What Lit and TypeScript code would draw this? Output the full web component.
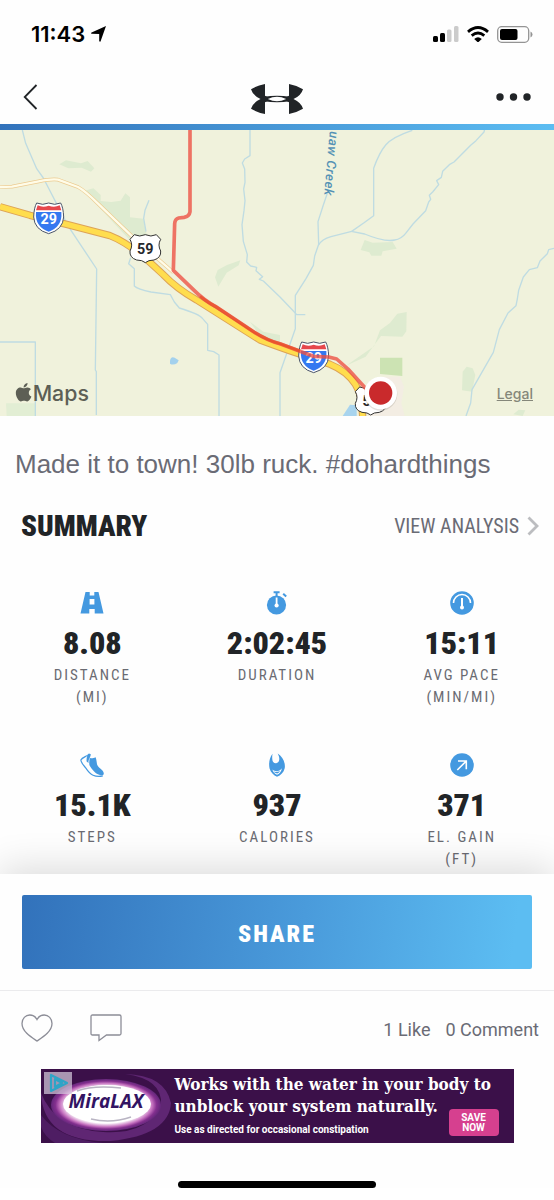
import { LitElement, html, css, svg } from "lit";
import { customElement, property } from "lit/decorators.js";

const icons = {
  road: svg`<path fill="#4499e0" d="M5.5 1h4.2v3.4h4.6V1h4.2L23.5 22.5h-8.8v-4.6H9.3v4.6H.5zM9.6 8v5.6h4.8V8z" fill-rule="evenodd"/>`,
  stopwatch: svg`<circle cx="11.5" cy="14" r="9.6" fill="#4499e0"/><path d="M8.6 1.2h6M11.6 1.2v4M18.2 2.8l3 2.8" stroke="#4499e0" stroke-width="2" fill="none"/><path d="M11.6 6.5v8" stroke="#fff" stroke-width="1.8"/><circle cx="11.6" cy="14.5" r="2.1" fill="#fff"/>`,
  gauge: svg`<circle cx="12" cy="12" r="11.8" fill="#4499e0"/><path d="M3.500 12a8.500 8.500 0 0 1 17 0" fill="none" stroke="#fff" stroke-width="1.600"/><path d="M12 7v9" stroke="#fff" stroke-width="2"/><circle cx="12" cy="16.6" r="2" fill="#fff"/>`,
  shoe: svg`<path fill="#4499e0" d="M9.8 4.8C11.5 5.8 13 5.4 15.6 4.2c1 2.400 1 5 1.500 7.400 1.100 3.900 6.700 5.300 6.700 8.900 0 1-.6 1.600-1.800 1.700-2.700 0-5.800-1.200-7.600-3.400C12 15.800 10.800 14.800 9.600 12.400 8.800 10 9.400 7.200 9.800 4.800z"/><path fill="#4499e0" d="M9 .5l1.800.8c-.3 3.400-2.600 4.700-2.300 8.700L6.600 8.400C6.700 5.600 6.300 3.400 9 .5z"/><path d="M9 1C7 3.500 2.500 4 .8 7c.4 3 2.700 5.200 4.700 7.600 2 3 4.200 6.300 7.500 7.600 3.300 1.400 6.500 1.500 9.800.7" fill="none" stroke="#4499e0" stroke-width="1.200"/>`,
  flame: svg`<path fill="#4499e0" d="M7.500.8C4.600 4.800 3.500 9.500 4.500 15.200c1.200 4.300 4.200 7 7.500 8.600 3.700-1.600 6.700-4.200 7.700-8.600C20.700 9.700 17.500 3.600 12.700.6c1.500 3 2.200 5.600 1 8-1.800 2.600-5.500 2-6.200-1.200-.4-2.200-.4-4.300 0-6.600z"/><path d="M7.300 16.600c1.300 3.400 2.700 4.400 4.700 5.200 2.400-1 4.200-3 4.900-6.600-2.300 3.200-6.300 4-9.600 1.400z" fill="#fff"/><path fill="#4499e0" d="M8.600 18.600c2.200.7 4.500.4 6.300-.7-.7 1.500-1.700 2.200-2.900 2.700-1.400-.5-2.500-1-3.400-2z"/>`,
  gain: svg`<circle cx="12" cy="12" r="11.800" fill="#4499e0"/><path d="M8 8h8.300v8.300M16.300 8L7.300 17" fill="none" stroke="#fff" stroke-width="1.600"/>`,
};

interface Stat {
  icon: keyof typeof icons;
  value: string;
  label: string;
  unit?: string;
}

const stats: Stat[] = [
  { icon: "road", value: "8.08", label: "DISTANCE", unit: "(MI)" },
  { icon: "stopwatch", value: "2:02:45", label: "DURATION" },
  { icon: "gauge", value: "15:11", label: "AVG PACE", unit: "(MIN/MI)" },
  { icon: "shoe", value: "15.1K", label: "STEPS" },
  { icon: "flame", value: "937", label: "CALORIES" },
  { icon: "gain", value: "371", label: "EL. GAIN", unit: "(FT)" },
];

@customElement("stat-tile")
class StatTile extends LitElement {
  @property({ attribute: false }) stat!: Stat;

  static styles = css`
    :host { display: block; text-align: center; }
    .icon { display: block; width: 24px; height: 24px; margin: 0 auto 10px; }
    .value {
      font: 900 32px/36px "Roboto Condensed", Roboto, sans-serif;
      color: #212427;
    }
    .label {
      margin-top: 3px;
      font: 400 15px/22px "Roboto Condensed", "Liberation Sans Narrow", sans-serif;
      letter-spacing: 2px;
      color: #6a6b72;
    }
  `;

  render() {
    const s = this.stat;
    return html`
      <svg class="icon" viewBox="0 0 24 24" aria-hidden="true">${icons[s.icon]}</svg>
      <div class="value">${s.value}</div>
      <div class="label">${s.label}${s.unit ? html`<br />${s.unit}` : ""}</div>
    `;
  }
}

const interstate = (x: number, y: number) => svg`
  <g transform="translate(${x} ${y})">
    <path d="M-36-46q18 8 36 0q18 8 36 0q8 14 9 42q-2 38-45 50q-43-12-45-50q1-28 9-42z" fill="#fff" stroke="#4a5468" stroke-width="3"/>
    <path d="M-38-19h76q4 44-38 59q-42-15-38-59z" fill="#3478f0"/>
    <path d="M-33-39q16 8 33 1q17 7 33-1l5 15h-76z" fill="#e6474c"/>
    <text y="18" class="shield light">29</text>
  </g>`;

const usRoute = (x: number, y: number) => svg`
  <g transform="translate(${x} ${y})">
    <path d="M-33-41q16 8 33 0q17 8 33 0l13 14q-10 17 0 35q2 20-20 27q-17 0-26 8q-9-8-26-8q-22-7-20-27q10-18 0-35z" fill="#fff" stroke="#333" stroke-width="3"/>
    <text y="16" class="shield">59</text>
  </g>`;

@customElement("route-map")
class RouteMap extends LitElement {
  static styles = css`
    :host { display: block; position: relative; height: 286px; background: #f0f2dc; }
    .canvas { display: block; width: 100%; height: 100%; }
    .water { fill: none; stroke: #bfdce2; stroke-width: 4; stroke-linejoin: round; }
    .park { fill: #deebd0; }
    .shield { font: 700 43px Roboto, sans-serif; text-anchor: middle; fill: #26282c; }
    .light { fill: #fff; }
    .creek { font: italic 500 39px Roboto, sans-serif; letter-spacing: 2px; fill: #5592b5; }
    .brand { font: 500 64px Inter, sans-serif; fill: #5d5f55; }
    .legal {
      position: absolute; right: 21px; bottom: 12px;
      font: 500 14px/20px Inter, sans-serif; color: #85877a;
    }
  `;

  render() {
    return html`
      <svg class="canvas" viewBox="0 15 1662 858" preserveAspectRatio="xMidYMid slice" role="img" aria-label="Workout route">
        <g class="park">
          <path d="M178 118l20-12 45 9 20-7 20 22-10 10-28-12-40 2z"/>
          <path d="M252 198l28-8 22 20v18l32 3 28-4 14-22 14 12v60l40 4 10 50-10 25-35-5z"/>
          <path d="M655 485l-10-28 8-22 28-15 40-14-5 15-36 22z"/>
          <path d="M750 590l40 30 50 10v30l-50-12z"/>
          <path d="M18 835h88v38H20z" fill="#e2eed4"/>
          <path d="M1082 375l12-30 24 8 60-2 12 20-42 8-4 13h-30l-6-10z"/>
          <path d="M1038 722l84-58 18-48 30-22 22-28 28-5-1 58-12 16-64-2-18 24-28 38z"/>
          <path d="M1388 740l12-15 18 5 8 20-10 50-30-4z"/>
          <path d="M1540 868l16-14 20 2-8 17z"/>
        </g>
        <path d="M1140 755h60l12 30-8 50 10 38h-110l20-90z" fill="#f3ede3"/>
        <path d="M1140 698h67v55l-67-6z" fill="#cce3b3"/>
        <path d="M1028 873l22-34 20 2v32z" fill="#a8d4ee"/>
        <path d="M510 708q2-15 14-10l12 8-4 8q-12 8-22 2z" fill="#a3d1ed"/>
        <g class="water">
          <path d="M67 15l10 40 33 76 20 28 75 145 85 128-4 303 3 5v130"/>
          <path d="M0 651h106v222"/>
          <path d="M447 226l-12 30-4 24 7 40M392 398l-6 18 17 15v52q10 10 50 18l58 8 12 22 15 18q60 18 70 32l15 17v78l18 4 16 10v185"/>
          <path d="M750 15v77l-16 10-7 12 7 18 1 40-4 20 4 35-3 30-6 42 4 50 12 40-2 22 12 12 18 4-2 10 20 18-10 8 12 5 50 48 38 40 12 13h26"/>
          <path d="M982 205l-12 35-16 50 2 68-12 35-4 28-22 40-32 50v100l-46 132v130"/>
          <path d="M1237 16q-60 20-80 44t-36 70v142l-30 22-36 25-62 16q-28 8-37 25"/>
          <path d="M1054 319l40 8q60 25 90 18 20-3 33-20l22-28 38-40 9-26 6-8-4-12 10-10 18-22-6-12 14-10 4-18 20-20 14-8 12-12 38-38 16-14 24-26 6-26"/>
          <path d="M1662 370l-16 4-4 12-22 22-8 20-24 6-18 22-14 40-4 26-4 20-24 22-26 50-18 68-64 112-4 40-14 39"/>
        </g>
        <g fill="none" stroke-linejoin="round">
          <path d="M0 186l36-1 80-16q40-8 58-5l60 22q22 12 60 50l100 96 126 110" stroke="#eccb91" stroke-width="11"/>
          <path d="M0 186l36-1 80-16q40-8 58-5l60 22q22 12 60 50l100 96 126 110" stroke="#fffce8" stroke-width="7"/>
          <path d="M0 245l90 26 110 27 130 34q42 16 100 62l60 55q40 42 100 76l190 120q70 26 130 46l80 27q50 20 76 60 20 30 22 95" stroke="#dda357" stroke-width="22"/>
          <path d="M0 245l90 26 110 27 130 34q42 16 100 62l60 55q40 42 100 76l190 120q70 26 130 46l80 27q50 20 76 60 20 30 22 95" stroke="#ffdd4e" stroke-width="16"/>
        </g>
        ${interstate(146, 280)} ${usRoute(436, 370)} ${interstate(941, 697)} ${usRoute(1112, 827)}
        <path d="M570 15v245q-2 14-18 17l-16 2q-11 3-12 17l-4 140 60 58q34 34 66 50l90 60q60 42 104 52l100 38 46 2 24 6 34 30 60 66" fill="none" stroke="#ed4f42" stroke-opacity=".78" stroke-width="11" stroke-linejoin="round"/>
        <path d="M600 514q24 18 46 30l90 60q60 42 104 52l60 22" fill="none" stroke="#e84a20" stroke-opacity=".65" stroke-width="9"/>
        <circle cx="1142" cy="807" r="50" fill="#8b8578" opacity=".25"/>
        <circle cx="1142" cy="804" r="49" fill="#fff"/>
        <circle cx="1142" cy="804" r="35" fill="#c92a2c"/>
        <text class="creek" transform="translate(989 18) rotate(95)">uaw Creek</text>
        <g transform="translate(47 770) scale(.124)" fill="#5d5f55">
          <path d="M318.700 268.700c-.2-36.700 16.400-64.400 50-84.800-18.800-26.900-47.200-41.700-84.700-44.600-35.500-2.800-74.300 20.700-88.500 20.700-15 0-49.400-19.700-76.400-19.700C63.300 141.200 4 184.800 4 273.500q0 39.300 14.400 81.200c12.800 36.700 59 126.700 107.200 125.200 25.200-.6 43-17.900 75.800-17.900 31.800 0 48.300 17.900 76.400 17.900 48.600-.7 90.400-82.500 102.600-119.300-65.200-30.700-61.700-90-61.700-91.900zM262.100 104.500c27.300-32.400 24.800-61.900 24-72.500-24.100 1.400-52 16.400-67.900 34.900-17.500 19.800-27.800 44.300-25.600 71.900 26.100 2 49.900-11.400 69.500-34.300z"/>
        </g>
        <text x="98" y="829" class="brand">Maps</text>
      </svg>
      <a class="legal" href="#legal">Legal</a>
    `;
  }
}

@customElement("ad-banner")
class AdBanner extends LitElement {
  static styles = css`
    :host { display: block; }
    .ad {
      position: relative; display: flex; overflow: hidden; height: 74px;
      background: #3b1049; color: #fff;
    }
    .art { flex: none; width: 134px; height: 74px; }
    .logo { font: italic 700 19px "Open Sans", sans-serif; fill: #331463; text-anchor: middle; }
    .copy { flex: 1; min-width: 0; padding-top: 4px; white-space: nowrap; }
    .headline { margin: 0; font: 700 17px/22px "Roboto Slab", "DejaVu Serif Condensed", "Liberation Serif", serif; }
    .note { margin: 3px 0 0; font: 700 10px/20px Roboto, sans-serif; }
    .cta {
      position: absolute; right: 15px; bottom: 7px; width: 50px; height: 27px;
      padding: 0; border: 0; border-radius: 4px; background: #d6408f; color: #fff;
      font: 700 10px/10px Roboto, sans-serif;
    }
  `;

  render() {
    return html`
      <section class="ad" aria-label="Advertisement">
        <svg class="art" viewBox="0 0 134 74">
          <defs>
            <radialGradient id="glow">
              <stop offset=".7" stop-color="#fff"/><stop offset=".84" stop-color="#c673c0"/>
              <stop offset=".92" stop-color="#84308f"/><stop offset="1" stop-color="#63277a"/>
            </radialGradient>
          </defs>
          <path d="M0 24Q2 74 70 72Q128 66 130 34Q124 6 84 5Q122 10 120 36Q106 66 62 63Q14 60 0 24z" fill="#5f2673"/>
          <path d="M0 46Q18 70 62 74H14Q4 68 0 58z" fill="#4e1d63"/>
          <ellipse cx="65" cy="36" rx="55" ry="26" fill="url(#glow)"/>
          <ellipse cx="66" cy="35" rx="44" ry="19" fill="#fff"/>
          <path d="M36 22q16-6 44-3M50 50q20 5 40-2" fill="none" stroke="#b9b4c3" stroke-width="1.500"/>
          <text x="65" y="39" class="logo">MiraLAX</text>
          <path d="M3 3h28v22H3z" fill="#d9cfe0" opacity=".7"/>
          <path d="M10 6v16l16-8zM14 10v8l7-4z" fill="none" stroke="#2fa4c7" stroke-width="2.200" stroke-linejoin="round"/>
        </svg>
        <div class="copy">
          <p class="headline">Works with the water in your body to<br />unblock your system naturally.</p>
          <p class="note">Use as directed for occasional constipation</p>
        </div>
        <button class="cta">SAVE<br />NOW</button>
      </section>
    `;
  }
}

@customElement("app-root")
class AppRoot extends LitElement {
  static styles = css`
    :host { display: block; background: #fefefe; font-family: Inter, sans-serif; color: #212427; }
    button { padding: 0; border: 0; background: none; color: inherit; cursor: pointer; }
    svg { display: block; }
    .status { display: flex; align-items: center; justify-content: space-between; height: 68px; padding: 0 21px 0 31px; color: #000; }
    .time { display: flex; align-items: center; gap: 6px; font: 600 22px/28px Inter, sans-serif; }
    .signals { display: flex; align-items: center; gap: 8px; }
    .nav { display: grid; grid-template-columns: 1fr auto 1fr; align-items: center; box-sizing: border-box; height: 56px; padding: 2px 23px 0; }
    .mark { padding-top: 4px; }
    .more { justify-self: end; }
    .strip { height: 6px; background: linear-gradient(90deg, #3272bb, #5cbdf2); }
    .note { margin: 0; padding: 32px 15px 0; font: 400 26px/32px "Liberation Sans", sans-serif; color: #6a6b75; }
    .heading { display: flex; align-items: center; justify-content: space-between; padding: 30px 15px 0 21px; }
    .title { margin: 0; font: 900 29px/32px "Roboto Condensed", Roboto, sans-serif; }
    .analysis {
      display: flex; align-items: center; gap: 8px; text-decoration: none; color: #6a6b75;
      font: 400 20px/32px "Roboto Condensed", "Liberation Sans Narrow", sans-serif;
    }
    .stats { display: grid; grid-template-columns: repeat(3, 1fr); row-gap: 45px; padding: 49px 0 4px; }
    .sheet { position: relative; background: #fefefe; box-shadow: 0 -6px 36px rgba(0, 0, 0, .14); clip-path: inset(-60px 0 0 0); }
    .action { padding: 21px 22px; border-bottom: 1px solid #ebebed; }
    .share {
      display: block; width: 100%; height: 74px; padding-top: 4px; border-radius: 2px; color: #fff;
      background: linear-gradient(97deg, #3272bb, #4a9bdb 55%, #5cbdf2 96%);
      font: 900 24px/28px "Roboto Condensed", Roboto, sans-serif; letter-spacing: 2px;
    }
    .social { display: flex; align-items: center; height: 78px; padding: 0 15px 0 21px; font: 400 18px/24px Roboto, sans-serif; color: #6a6b75; }
    .reactions { display: flex; flex: 1; gap: 37px; padding-bottom: 4px; }
    .counts { display: flex; gap: 15px; }
    .banner { max-width: 473px; margin: 0 auto; }
    .home { width: 198px; height: 7px; margin: 38px auto 12px; border-radius: 4px; background: #000; }
  `;

  render() {
    return html`
      <header>
        <div class="status">
          <div class="time">
            <span>11:43</span>
            <svg width="15" height="16" viewBox="0 0 15 16"><path d="M15 0L9.500 15.500Q8.700 16 8.200 15V8L.6 7.800Q-.5 7.300.6 6.600z"/></svg>
          </div>
          <div class="signals">
            <svg width="26" height="16" viewBox="0 0 26 16">
              <rect y="10" width="5" height="6" rx="1.500"/><rect x="7" y="7" width="5" height="9" rx="1.500"/>
              <rect x="14" y="3.500" width="4.500" height="12.500" rx="1.500" fill="#cbcbcb"/><rect x="21" width="4.500" height="16" rx="1.500" fill="#cbcbcb"/>
            </svg>
            <svg width="22" height="16" viewBox="0 0 22 16"><path d="M1 5.800q10-8.400 20 0M4.700 9.600q6.300-5 12.600 0" fill="none" stroke="#000" stroke-width="2.900"/><path d="M7.200 13q3.800-3.300 7.600 0L11 16.500z"/></svg>
            <svg width="36" height="17" viewBox="0 0 36 17"><rect x=".7" y=".7" width="31" height="15.600" rx="4" fill="none" stroke="#949494" stroke-width="1.300"/><rect x="3" y="3" width="17.500" height="11" rx="2"/><path d="M33.500 5.500q2 .8 2 3t-2 3z" fill="#949494"/></svg>
          </div>
        </div>
        <nav class="nav">
          <button aria-label="Back"><svg width="15" height="26" viewBox="0 0 15 26"><path d="M13.500 1L1.700 13l11.800 12" fill="none" stroke="#212427" stroke-width="1.800"/></svg></button>
          <svg class="mark" width="52" height="30" viewBox="0 0 52 30" role="img" aria-label="Under Armour">
            <g fill="#212427">
              <path d="M0 5.200Q6 1.500 14 0V11.800L16.500 13V17L14 18.200V30Q6 28.500 0 24.800Q1.800 18.500 9.500 15Q1.800 11.500 0 5.200z"/>
              <path d="M52 5.200Q46 1.500 38 0V11.800L35.500 13V17L38 18.200V30Q46 28.500 52 24.800Q50.200 18.500 42.500 15Q50.200 11.500 52 5.200z"/>
              <path fill-rule="evenodd" d="M13 12.800Q26 10.800 39 12.800V17.200Q26 19.200 13 17.200zM16.800 15Q26 10.400 35.200 15Q26 19.600 16.800 15z"/>
            </g>
          </svg>
          <button class="more" aria-label="More options"><svg width="35" height="8" viewBox="0 0 35 8" fill="#212427"><circle cx="4" cy="4" r="3.700"/><circle cx="17.500" cy="4" r="3.700"/><circle cx="31" cy="4" r="3.700"/></svg></button>
        </nav>
        <div class="strip"></div>
      </header>
      <main>
        <route-map></route-map>
        <p class="note">Made it to town! 30lb ruck. #dohardthings</p>
        <div class="heading">
          <h1 class="title">SUMMARY</h1>
          <a class="analysis" href="#analysis">VIEW ANALYSIS
            <svg width="12" height="20" viewBox="0 0 12 20"><path d="M1.500 1.500L10 10l-8.500 8.500" fill="none" stroke="#bcbdc0" stroke-width="2.800"/></svg>
          </a>
        </div>
        <section class="stats">${stats.map((s) => html`<stat-tile .stat=${s}></stat-tile>`)}</section>
      </main>
      <footer class="sheet">
        <div class="action"><button class="share">SHARE</button></div>
        <div class="social">
          <div class="reactions">
            <button aria-label="Like"><svg width="32" height="28" viewBox="0 0 32 28"><path d="M16 27C10 23 1 17.500 1 9.500 1 4.500 4.600 1 8.800 1 12 1 14.500 2.700 16 5.500 17.500 2.700 20 1 23.200 1 27.400 1 31 4.500 31 9.500 31 17.500 22 23 16 27z" fill="none" stroke="#8c8d97" stroke-width="1.300"/></svg></button>
            <button aria-label="Comment"><svg width="32" height="28" viewBox="0 0 32 28"><path d="M2.500 1h27q1.500 0 1.500 1.500v17q0 1.500-1.500 1.500H16.500L9 26.500V21H2.500Q1 21 1 19.500v-17Q1 1 2.500 1z" fill="none" stroke="#8c8d97" stroke-width="1.300"/></svg></button>
          </div>
          <div class="counts"><span>1 Like</span><span>0 Comment</span></div>
        </div>
        <div class="banner"><ad-banner></ad-banner></div>
        <div class="home"></div>
      </footer>
    `;
  }
}
